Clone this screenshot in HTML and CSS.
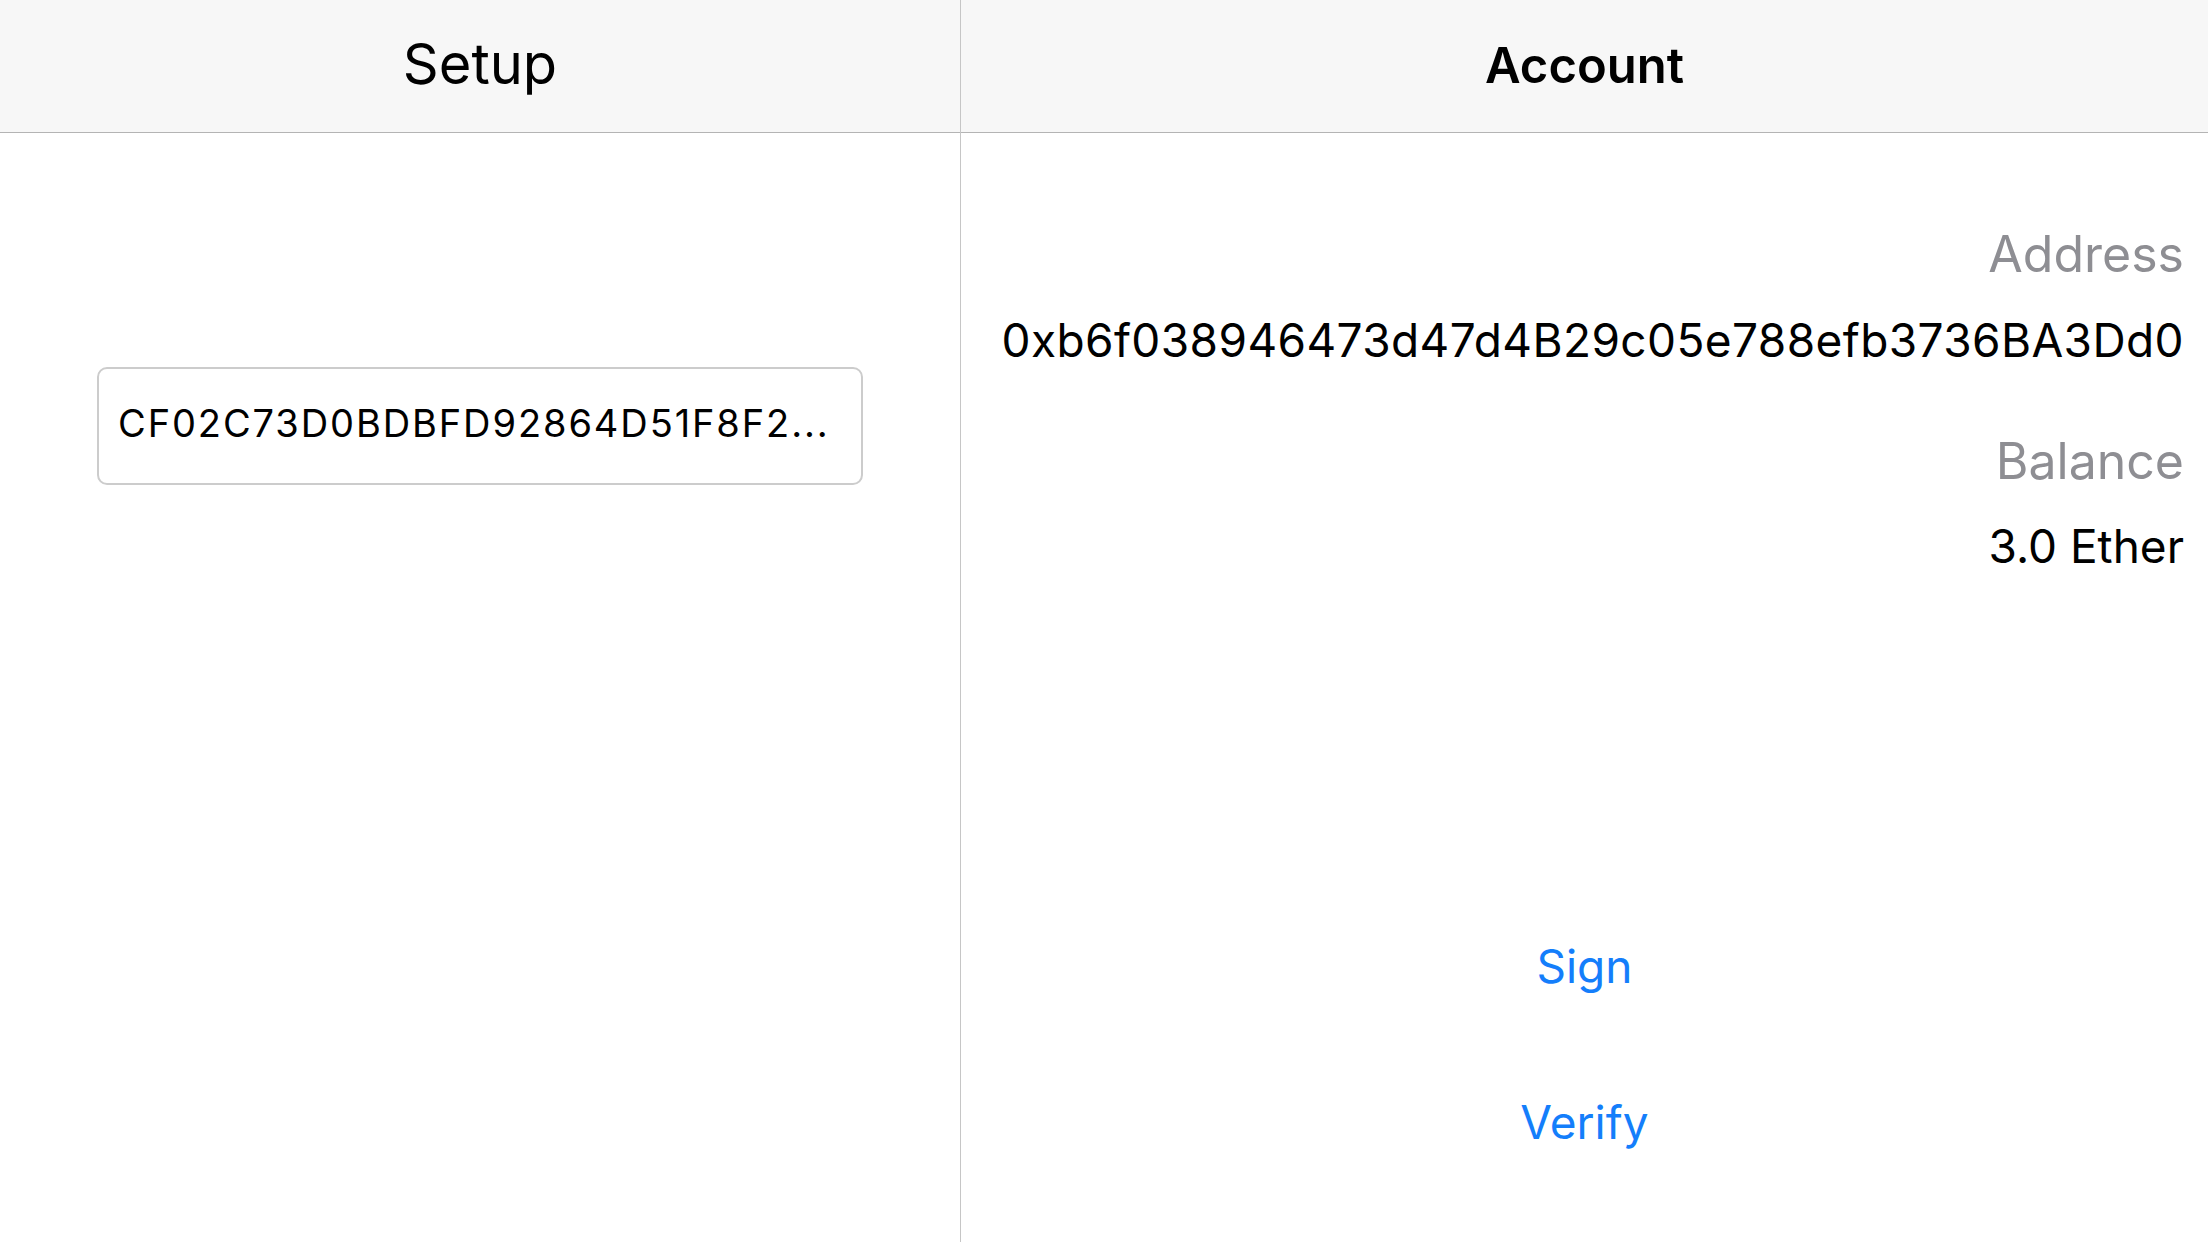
FILE: index.html
```html
<!DOCTYPE html>
<html lang="en">
<head>
<meta charset="utf-8">
<title>Setup / Account</title>
<link rel="stylesheet" href="styles.css">
</head>
<body>
<div class="app">
  <section class="pane pane-setup">
    <header class="navbar"><h1 class="title title-setup">Setup</h1></header>
    <div class="pane-body setup-body">
      <div class="key-field">CF02C73D0BDBFD92864D51F8F2...</div>
    </div>
  </section>
  <section class="pane pane-account">
    <header class="navbar"><h1 class="title title-account">Account</h1></header>
    <div class="pane-body account-body">
      <div class="label label-address">Address</div>
      <div class="value value-address">0xb6f038946473d47d4B29c05e788efb3736BA3Dd0</div>
      <div class="label label-balance">Balance</div>
      <div class="value value-balance">3.0 Ether</div>
      <div class="actions">
        <button class="action action-sign" type="button">Sign</button>
        <button class="action action-verify" type="button">Verify</button>
      </div>
    </div>
  </section>
</div>
</body>
</html>
```

FILE: styles.css
```css
* { box-sizing: border-box; }

html, body {
  margin: 0;
  padding: 0;
  width: 2208px;
  height: 1242px;
  background: #ffffff;
  overflow: hidden;
}

body {
  font-family: "Inter", "Noto Sans", "Liberation Sans", sans-serif;
  color: #000000;
}

.app {
  display: flex;
  width: 2208px;
  height: 1242px;
}

.pane {
  display: flex;
  flex-direction: column;
  height: 100%;
}

.pane-setup {
  width: 961px;
  border-right: 1px solid #c6c6c6;
}

.pane-account {
  flex: 1;
}

.navbar {
  height: 133px;
  background: #f7f7f7;
  border-bottom: 1px solid #b4b4b4;
  text-align: center;
}

.title {
  margin: 0;
  font-weight: 400;
  color: #000;
}

.title-setup {
  font-size: 56px;
  line-height: 128px;
  padding-bottom: 4px;
  font-weight: 400;
}

.title-account {
  font-size: 49px;
  line-height: 132px;
  font-weight: 600;
}

.setup-body {
  padding: 234px 97px 0 97px;
}

.key-field {
  height: 118px;
  border: 2px solid #cccccc;
  border-radius: 10px;
  padding: 0 20px 5px 19px;
  font-size: 38px;
  letter-spacing: 1.9px;
  line-height: 109px;
  white-space: nowrap;
  overflow: hidden;
  color: #000;
}

.account-body {
  display: flex;
  flex-direction: column;
  align-items: flex-end;
  padding: 91px 24px 0 0;
}

.label {
  font-size: 50px;
  line-height: 60px;
  color: #8e8e93;
}

.value {
  font-size: 46px;
  line-height: 60px;
  color: #000;
  white-space: nowrap;
}

.value-address {
  margin-top: 26px;
  letter-spacing: 0.4px;
}
.label-balance { margin-top: 61px; }
.value-balance { margin-top: 25px; }

.actions {
  align-self: stretch;
  display: flex;
  flex-direction: column;
  align-items: center;
  margin-top: 360px;
  padding-left: 24px;
  gap: 96px;
}

.action {
  font-family: inherit;
  font-size: 46px;
  line-height: 60px;
  color: #147efb;
  background: none;
  border: 0;
  padding: 0;
  margin: 0;
  cursor: pointer;
}
```
